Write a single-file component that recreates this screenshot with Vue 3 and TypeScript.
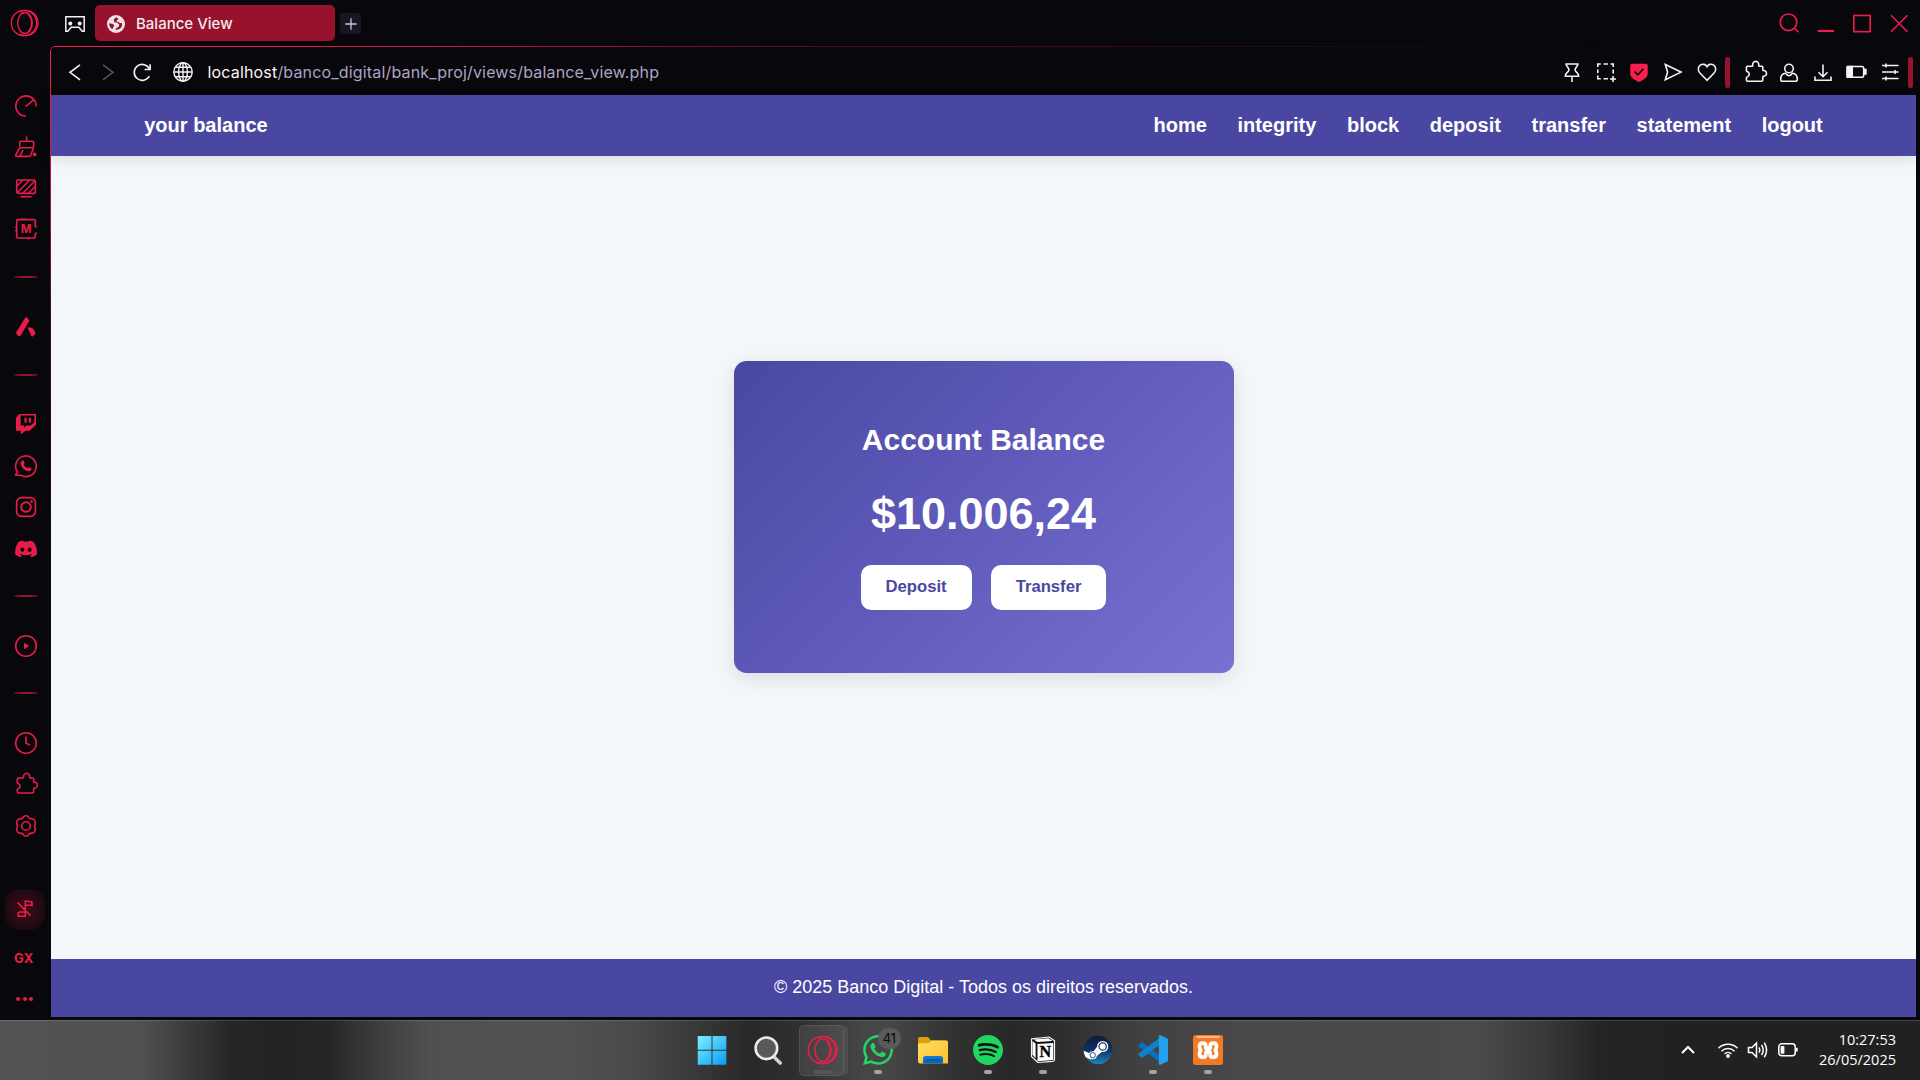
<script setup lang="ts">
interface SideItem {
  name: string
  kind: 'icon' | 'rule'
  art?: string
}

const navLinks: string[] = ['home', 'integrity', 'block', 'deposit', 'transfer', 'statement', 'logout']

const discord = 'M20.317 4.3698a19.7913 19.7913 0 00-4.8851-1.5152.0741.0741 0 00-.0785.0371c-.211.3753-.4447.8648-.6083 1.2495-1.8447-.2762-3.68-.2762-5.4868 0-.1636-.3933-.4058-.8742-.6177-1.2495a.077.077 0 00-.0785-.037 19.7363 19.7363 0 00-4.8852 1.515.0699.0699 0 00-.0321.0277C.5334 9.0458-.319 13.5799.0992 18.0578a.0824.0824 0 00.0312.0561c2.0528 1.5076 4.0413 2.4228 5.9929 3.0294a.0777.0777 0 00.0842-.0276c.4616-.6304.8731-1.2952 1.226-1.9942a.076.076 0 00-.0416-.1057c-.6528-.2476-1.2743-.5495-1.8722-.8923a.077.077 0 01-.0076-.1277c.1258-.0943.2517-.1923.3718-.2914a.0743.0743 0 01.0776-.0105c3.9278 1.7933 8.18 1.7933 12.0614 0a.0739.0739 0 01.0785.0095c.1202.099.246.1981.3728.2924a.077.077 0 01-.0066.1276 12.2986 12.2986 0 01-1.873.8914.0766.0766 0 00-.0407.1067c.3604.698.7719 1.3628 1.225 1.9932a.076.076 0 00.0842.0286c1.961-.6067 3.9495-1.5219 6.0023-3.0294a.077.077 0 00.0313-.0552c.5004-5.177-.8382-9.6739-3.5485-13.6604a.061.061 0 00-.0312-.0286zM8.02 15.3312c-1.1825 0-2.1569-1.0857-2.1569-2.419 0-1.3332.9555-2.4189 2.157-2.4189 1.2108 0 2.1757 1.0952 2.1568 2.419 0 1.3332-.9555 2.4189-2.1569 2.4189zm7.9748 0c-1.1825 0-2.1569-1.0857-2.1569-2.419 0-1.3332.9554-2.4189 2.1569-2.4189 1.2108 0 2.1757 1.0952 2.1568 2.419 0 1.3332-.946 2.4189-2.1568 2.4189Z'

const phone = 'M17.472 14.382c-.297-.149-1.758-.867-2.03-.967-.273-.099-.471-.148-.67.15-.197.297-.767.966-.94 1.164-.173.199-.347.223-.644.075-.297-.15-1.255-.463-2.39-1.475-.883-.788-1.48-1.761-1.653-2.059-.173-.297-.018-.458.13-.606.134-.133.298-.347.446-.52.149-.174.198-.298.298-.497.099-.198.05-.371-.025-.52-.075-.149-.669-1.612-.916-2.207-.242-.579-.487-.5-.669-.51-.173-.008-.371-.01-.57-.01-.198 0-.52.074-.792.372-.272.297-1.04 1.016-1.04 2.479 0 1.462 1.065 2.875 1.213 3.074.149.198 2.096 3.2 5.077 4.487.709.306 1.262.489 1.694.625.712.227 1.36.195 1.871.118.571-.085 1.758-.719 2.006-1.413.248-.694.248-1.289.173-1.413-.074-.124-.272-.198-.57-.347'

const bubble = 'm-5.421 7.403h-.004a9.87 9.87 0 01-5.031-1.378l-.361-.214-3.741.982.998-3.648-.235-.374a9.86 9.86 0 01-1.51-5.26c.001-5.45 4.436-9.884 9.888-9.884 2.64 0 5.122 1.03 6.988 2.898a9.825 9.825 0 012.893 6.994c-.003 5.45-4.437 9.884-9.885 9.884m8.413-18.297A11.815 11.815 0 0012.05 0C5.495 0 .16 5.335.157 11.892c0 2.096.547 4.142 1.588 5.945L.057 24l6.305-1.654a11.882 11.882 0 005.683 1.448h.005c6.554 0 11.89-5.335 11.893-11.893a11.821 11.821 0 00-3.48-8.413Z'

const spotify = 'M12 0C5.4 0 0 5.4 0 12s5.4 12 12 12 12-5.4 12-12S18.66 0 12 0zm5.521 17.34c-.24.359-.66.48-1.021.24-2.82-1.74-6.36-2.101-10.561-1.141-.418.122-.779-.179-.899-.539-.12-.421.18-.78.54-.9 4.56-1.021 8.52-.6 11.64 1.32.42.18.479.659.301 1.02zm1.44-3.3c-.301.42-.841.6-1.262.3-3.239-1.98-8.159-2.58-11.939-1.38-.479.12-1.02-.12-1.14-.6-.12-.48.12-1.021.6-1.141C9.6 9.9 15 10.561 18.72 12.84c.361.181.54.78.241 1.2zm.12-3.36C15.24 8.4 8.82 8.16 5.16 9.301c-.6.179-1.2-.181-1.38-.721-.18-.601.18-1.2.72-1.381 4.26-1.26 11.28-1.02 15.721 1.621.539.3.719 1.02.419 1.56-.299.421-1.02.599-1.559.3z'

const puzzle = 'M3.600 6.200h4.600c.5 0 .6-.4.5-.9a3.100 3.100 0 1 1 6 0c-.1.5 0 .9.5.9h2.700q.9 0 .9.900v2.700c0 .5.3.7.8.7a2.900 2.900 0 1 1 0 5.800c-.5 0-.8.2-.8.7v3q0 1.200-1.200 1.200H3.600q-1.200 0-1.200-1.200v-2.200c0-.5.300-.7.8-.8a2.800 2.800 0 0 0 0-5.400c-.5-.1-.8-.3-.8-.8V7.400q0-1.200 1.200-1.200z'

const sideItems: SideItem[] = [
  { name: 'speed', kind: 'icon', art: '<path d="M12 22.300A10.200 10.200 0 1 1 22.200 12.400M11.600 12.400l7.800-6.300"/>' },
  { name: 'cleaner', kind: 'icon', art: '<path d="M12.600 1.500v4.800M5.800 11.500V7.600q0-1.300 1.300-1.300h11.200q1.300 0 1.300 1.300v3.900q0 1.200-1.200 1.200H6.400q-.9 0-1.300 1L1.700 20q-.3 1.400 1 1.400h12.600q1.100 0 1.600-1.200l2.600-7.700M9 15.200l-2.800 5.200"/><circle cx="20.600" cy="19.400" r="1.900" fill="currentColor" stroke="none"/>' },
  { name: 'monitor', kind: 'icon', art: '<rect x="2.700" y="4" width="18.700" height="13.400" rx="1.800"/><path d="M3 10l6-6M3.500 16.500L15.500 4.200M9 17L20.500 5.300M14.800 17l6.200-6.200" stroke-width="1.500"/><path d="M6.400 20.700h11.200"/>' },
  { name: 'memory', kind: 'icon', art: '<path d="M21.300 8V4q0-1.400-1.400-1.400H4.100Q2.700 2.600 2.700 4v15.600Q2.700 21 4.100 21h15.800q1.400 0 1.400-1.400v-3M21.300 8v2M21.300 16h1.500M1.200 10.300h1.500M1.200 13.500h1.500M7.300 2.600V1.200M10.300 2.600V1.200M14.300 21v1.500M21.300 10h1.500"/><text x="12" y="15.800" text-anchor="middle" font-family="Inter, sans-serif" font-weight="700" font-size="11.500" fill="currentColor" stroke="none">M</text>' },
  { name: 'rule-1', kind: 'rule' },
  { name: 'opera-air', kind: 'icon', art: '<path stroke="none" fill="currentColor" d="M11.800 2q2.600 1 3.600 3.700L6.400 21q-3.300.6-4.400-3.600zM13.300 12.600q4.400-1.300 7.100 2.900l1.300 3-3.300 3.200q-1.400-.5-2-3z"/>' },
  { name: 'rule-2', kind: 'rule' },
  { name: 'twitch', kind: 'icon', art: '<path stroke="none" fill="currentColor" fill-rule="evenodd" d="M5.300 1.900H22v10.800l-6.300 6.100h-4L6.800 22.200v-3.400H2V5.700zM6.600 3.600v9.900h3.400v2.200l2.500-2.200h4.200l3.600-3.200V3.600z"/><path d="M11.600 5.700v5.100M15.900 5.700v5.100" stroke-width="2.200"/>' },
  { name: 'whatsapp', kind: 'icon', art: '<path d="M3.600 18.300A10.300 10.300 0 1 1 7 21.300H2.200q-.8 0-.5-.8z"/><path stroke="none" fill="currentColor" d="M8 6.600q.8-.8 1.500.2l1 1.800q.4.8-.3 1.500-.5.4-.1 1.100 1.200 2.100 2.900 2.800.6.200 1-.3.6-.8 1.400-.4l1.700 1q.8.5.3 1.400-1.200 1.900-3.300 1.600-6-1.200-7.300-7.500-.2-1.900 1.200-3.200z"/>' },
  { name: 'instagram', kind: 'icon', art: '<rect x="2.600" y="2.600" width="18.800" height="18.800" rx="5"/><circle cx="12" cy="12" r="4.800" stroke-width="2"/><circle cx="17.600" cy="6.400" r="1.300" fill="currentColor" stroke="none"/>' },
  { name: 'discord', kind: 'icon', art: `<path stroke="none" fill="currentColor" transform="translate(1.100 .9) scale(.91)" d="${discord}"/>` },
  { name: 'rule-3', kind: 'rule' },
  { name: 'player', kind: 'icon', art: '<circle cx="12" cy="12" r="10.300"/><path stroke="none" fill="currentColor" d="M10 8.700v6.600l5.300-3.300z"/>' },
  { name: 'rule-4', kind: 'rule' },
  { name: 'history', kind: 'icon', art: '<circle cx="12" cy="12" r="10.300"/><path d="M12 5.500v6.800l4 1.600"/>' },
  { name: 'extensions', kind: 'icon', art: `<path transform="translate(.9 -.2)" d="${puzzle}"/>` },
  { name: 'settings', kind: 'icon', art: '<path d="M12 1.700c1.500 0 2.300.7 2.900 1.900.4.800.9 1 1.700 1 3.300-.3 5.600 2.700 4.500 5.300-.5 1.300-.5 2.900 0 4.200 1.100 2.600-1.200 5.600-4.500 5.300-.8 0-1.300.2-1.700 1-.6 1.200-1.400 1.900-2.900 1.900s-2.300-.7-2.900-1.900c-.4-.8-.9-1-1.700-1-3.300.3-5.600-2.700-4.500-5.300.5-1.300.5-2.900 0-4.200-1.100-2.600 1.200-5.600 4.500-5.300.8 0 1.300-.2 1.700-1C9.700 2.400 10.500 1.700 12 1.700z"/><circle cx="12" cy="12" r="4.300"/>' },
]
</script>

<template>
  <div class="screen">
    <div class="browser">
      <aside class="sidebar">
        <svg class="opera-mark" width="30" height="30" viewBox="0 0 30 30">
          <g fill="none" stroke="#f01d4b" stroke-width="1.300">
            <circle cx="14" cy="15" r="12.700" />
            <ellipse cx="15" cy="15" rx="7.300" ry="10.500" />
            <path d="M10 3.800a12.500 12.500 0 1 1 0 22.400M18 6.500a7.500 10 0 0 1 0 17" />
          </g>
        </svg>
        <div v-for="item in sideItems" :key="item.name" class="side-item" :class="[item.kind, item.name]">
          <svg v-if="item.kind === 'icon'" class="side-icon" viewBox="0 0 24 24" v-html="item.art"></svg>
          <i v-else class="side-rule"></i>
        </div>
        <div class="music">
          <svg width="24" height="24" viewBox="0 0 24 24" fill="none" stroke="#f01d4b" stroke-width="1.500">
            <path d="M4.500 5.500l13 13M12.300 18.500V4l6.700 1v3.200h-6.700M12.300 15H6.700l-1.500 1v3.300h7z" />
          </svg>
        </div>
        <div class="gx">GX</div>
        <div class="dots"><i></i><i></i><i></i></div>
      </aside>

      <div class="main">
        <div class="tabs">
          <svg class="pad" width="22" height="18" viewBox="0 0 22 18">
            <path d="M1.800 1.700h18.400v14.500h-2l-3.400-3.900H7.200l-3.400 3.900h-2z" fill="none" stroke="#f5f2f7" stroke-width="1.500" />
            <circle cx="6.300" cy="8.400" r="2" fill="#f5f2f7" /><circle cx="15.700" cy="8.400" r="2" fill="#f5f2f7" />
          </svg>
          <div class="tab">
            <svg width="18" height="18" viewBox="0 0 18 18">
              <circle cx="9" cy="9" r="9" fill="#ece4e9" />
              <path d="M9.500 2.300L6.800 4.200l.3 2.700 3.300.8 1.900 1.700-.6 2.300-2.900 1.700-.3 1.400c4.500.4 7.200-2.700 6.500-6.700-1.300.2-2.500.1-3.300-1.100l-1.800-.3-.2-1.500 2-1zM2 8.200c.3 3 1.400 4.700 3.700 6l.3-1.800 1.400-1.600-1.500-1.700z" fill="#97122d" />
            </svg>
            <span>Balance View</span>
          </div>
          <div class="new-tab">
            <svg width="12" height="12" viewBox="0 0 12 12"><path d="M6 .3v11.400M.3 6h11.400" stroke="#c9c3dc" stroke-width="1.300" /></svg>
          </div>
          <div class="win-controls">
            <svg viewBox="0 0 24 24"><circle cx="11.500" cy="11.300" r="8.300" /><path d="M17.500 17.300l4 4" /></svg>
            <svg viewBox="0 0 24 24"><path d="M3.800 20h16.200" stroke-width="2" /></svg>
            <svg viewBox="0 0 24 24"><rect x="3.800" y="4.500" width="16.400" height="16.200" /></svg>
            <svg viewBox="0 0 24 24"><path d="M4 4.200l16.500 16.500M20.500 4.200L4 20.700" /></svg>
          </div>
        </div>

        <div class="toolbar">
          <svg class="back" viewBox="0 0 24 24"><path d="M17 4.800L7 12.300l10 7.500" /></svg>
          <svg class="forward" viewBox="0 0 24 24"><path d="M7 4.800l10 7.500-10 7.500" /></svg>
          <svg class="reload" viewBox="0 0 24 24"><path d="M19.600 9.200A8 8 0 1 0 19.400 16M20.100 4.200v5.300h-5.500" /></svg>
          <svg class="globe" viewBox="0 0 24 24"><circle cx="12" cy="12" r="9.200" /><ellipse cx="12" cy="12" rx="4.400" ry="9.200" /><path d="M12 2.800v18.400M2.800 12h18.400M4.400 7.200h15.200M4.400 16.800h15.200" /></svg>
          <div class="url"><b>localhost</b>/banco_digital/bank_proj/views/balance_view.php</div>
          <div class="actions first">
            <svg viewBox="0 0 24 24"><path d="M5.300 4h13.400M6.200 4c0 2.500 2.700 3.500 2.700 5.800 0 2.700-3.600 2.700-3.600 6.500h13.400c0-3.800-3.600-3.800-3.600-6.500 0-2.300 2.700-3.300 2.700-5.800M12 16.500V22" /></svg>
            <svg viewBox="0 0 24 24"><path d="M3.800 7V4h3M9.500 4h4.500M16.500 4h2.700v3M3.800 9.500v3.500M3.800 15.500v3.200h3M9.500 18.700H14M19.200 9.500v4M19 16v6M16 19h6" /></svg>
            <svg viewBox="0 0 24 24"><path d="M5 3.700h14q1.700 0 1.700 1.700v8.300c0 4-4.200 6-8.700 8.300-4.500-2.300-8.700-4.300-8.700-8.300V5.400q0-1.700 1.700-1.700z" fill="#fa1e4e" stroke="none" /><path d="M7.600 11.600l3.200 3.300 5.600-6" stroke="#0a080d" stroke-width="1.600" /></svg>
            <svg viewBox="0 0 24 24"><path d="M4.300 4.500l15.700 7.600-15.700 7.700 2.300-7.700z" /></svg>
            <svg viewBox="0 0 24 24"><path d="M12 20.300L4.900 13C2.400 10.300 3 6.500 5.600 4.900 8 3.500 10.800 4.300 12 6.600c1.200-2.300 4-3.100 6.400-1.700 2.600 1.600 3.200 5.400.7 8.100z" /></svg>
          </div>
          <i class="divider"></i>
          <div class="actions second">
            <svg viewBox="0 0 24 24"><path :d="puzzle" /></svg>
            <svg viewBox="0 0 24 24"><circle cx="12" cy="8.500" r="4.300" /><path d="M8.600 13.200c-3.300.3-4.900 1.900-4.900 6.100q0 2 1.600 2h13.400q1.600 0 1.600-2c0-4.200-1.600-5.800-4.900-6.100-1.800 3.300-5 3.300-6.800 0z" /></svg>
            <svg viewBox="0 0 24 24"><path d="M12 4.500v12M7.500 12.300l4.500 4.400 4.500-4.400M4 16.500v3.700h16v-3.700" /></svg>
            <svg viewBox="0 0 24 24"><rect x="3.200" y="6.500" width="16.500" height="10.700" rx="2" /><path d="M3.200 6.500h5v10.700h-5z" fill="#f5f2f7" /><path d="M20.300 9.500h1.600v4.500h-1.600z" /></svg>
            <svg viewBox="0 0 24 24"><path d="M4 5.500h16.500M4 12h16.500M4 18.500h16.500M8 3.500v4M17 10v4M8 16.500v4" /></svg>
          </div>
          <i class="divider last"></i>
        </div>

        <div class="page">
          <header class="page-head">
            <div class="brand">your balance</div>
            <nav><a v-for="link in navLinks" :key="link">{{ link }}</a></nav>
          </header>
          <main class="page-body">
            <section class="card">
              <h2>Account Balance</h2>
              <p class="amount">$10.006,24</p>
              <div class="buttons">
                <button type="button">Deposit</button>
                <button type="button">Transfer</button>
              </div>
            </section>
          </main>
          <footer class="page-foot">© 2025 Banco Digital - Todos os direitos reservados.</footer>
        </div>
      </div>
    </div>

    <div class="taskbar">
      <div class="apps">
        <div class="app first-app">
          <svg width="30" height="30" viewBox="0 0 30 30">
            <defs><linearGradient id="win" x1="0" y1="0" x2="1" y2="1"><stop offset="0" stop-color="#7df0ff" /><stop offset="1" stop-color="#0a9bf8" /></linearGradient></defs>
            <path fill="url(#win)" d="M.7 1h13.800v13.700H.7zM15.500 1h13.800v13.700H15.500zM.7 15.700h13.800v14H.7zM15.500 15.700h13.800v14H15.500z" />
          </svg>
        </div>
        <div class="app">
          <svg width="30" height="30" viewBox="0 0 30 30" fill="none">
            <path d="M20.500 21.500l6.700 6.500" stroke="#cfd1d6" stroke-width="3.600" stroke-linecap="round" />
            <circle cx="13.400" cy="13.300" r="10.800" fill="#59595a" stroke="#ececee" stroke-width="2.600" />
          </svg>
        </div>
        <div class="app active">
          <svg width="32" height="32" viewBox="0 0 30 30">
            <g fill="none" stroke="#f01d4b" stroke-width="1.300">
              <circle cx="14" cy="15" r="12.800" />
              <ellipse cx="15" cy="15" rx="7.500" ry="10.700" />
              <path d="M10 3.600a12.700 12.700 0 1 1 0 22.800M18 6.300a7.700 10.200 0 0 1 0 17.400" />
            </g>
          </svg>
        </div>
        <div class="app running">
          <svg width="30" height="30" viewBox="0 0 24 24"><path :d="phone + bubble" fill="#25d366" /></svg>
          <span class="badge">41</span>
        </div>
        <div class="app">
          <svg width="32" height="30" viewBox="0 0 32 30">
            <defs>
              <linearGradient id="fold" x1="0" y1="0" x2="1" y2="1"><stop offset="0" stop-color="#ffdf6b" /><stop offset="1" stop-color="#fdbf22" /></linearGradient>
              <linearGradient id="dock" x1="0" y1="0" x2="0" y2="1"><stop offset="0" stop-color="#0f7ed2" /><stop offset="1" stop-color="#0a62b4" /></linearGradient>
            </defs>
            <path d="M1 4q0-2 2-2h8l3 3.500H29q2 0 2 2V16H1z" fill="#e0a008" />
            <path d="M1 8.500L12 8l2.500-2.500H29q2 0 2 2V28.500H3q-2 0-2-2z" fill="url(#fold)" />
            <path d="M6 28.500V23.500q0-2.500 2.500-2.500h15q2.500 0 2.500 2.500v5z" fill="url(#dock)" />
            <path d="M9.500 25h13" stroke="#0a4b96" stroke-width="1.200" />
          </svg>
        </div>
        <div class="app running">
          <svg width="30" height="30" viewBox="0 0 24 24"><circle cx="12" cy="12" r="11" fill="#111" /><path :d="spotify" fill="#1ed760" /></svg>
        </div>
        <div class="app running">
          <svg width="26" height="28" viewBox="0 0 26 28">
            <path d="M1.500 2.800L19 1l5.500 3.800v18.400q0 2-2 2.200L8 26.500l-6.500-6z" fill="#111" stroke="#f3f3f3" stroke-width="1.200" stroke-linejoin="round" />
            <path d="M3.500 3.500L18.500 2.300l4 2.600L7.500 6z" fill="#fff" />
            <path d="M2.400 5L5.600 7.500v14.700L2.400 18.700z" fill="#fff" />
            <path d="M7.500 8L23.300 7v17L7.500 25.300z" fill="#fff" />
            <text x="15.400" y="21.300" text-anchor="middle" font-family="Liberation Serif, serif" font-weight="700" font-size="16" stroke="#000" stroke-width=".4">N</text>
          </svg>
        </div>
        <div class="app">
          <svg width="30" height="30" viewBox="0 0 30 30">
            <defs>
              <linearGradient id="steam" x1="0" y1="0" x2="0" y2="1"><stop offset="0" stop-color="#15193f" /><stop offset=".5" stop-color="#0e3263" /><stop offset="1" stop-color="#1b88bb" /></linearGradient>
              <clipPath id="disc"><circle cx="15" cy="15" r="14.300" /></clipPath>
            </defs>
            <circle cx="15" cy="15" r="14.300" fill="url(#steam)" />
            <g clip-path="url(#disc)">
              <path d="M0 15.500l8.500 3.500 6.500-8.500 5 5.500-7.500 6-5 2.500L0 21z" fill="#fff" />
              <circle cx="9.800" cy="20.200" r="4" fill="#fff" /><circle cx="9.800" cy="20.200" r="2.700" fill="none" stroke="#20477a" stroke-width=".9" />
              <circle cx="19.700" cy="11.500" r="5.600" fill="#fff" /><circle cx="19.700" cy="11.500" r="3.700" fill="#fff" stroke="#17325e" stroke-width="1.200" />
            </g>
          </svg>
        </div>
        <div class="app running">
          <svg width="30" height="30" viewBox="0 0 30 30">
            <path d="M1 9.500l2.200-2q1-.6 2 .2L24 22v7L1 11.800q-1.100-1.200 0-2.300z" fill="#0a6fb8" />
            <path d="M1 20.500l2.200 2q1 .6 2-.2L24 8V1L1 18.200q-1.100 1.200 0 2.300z" fill="#1280c8" />
            <path d="M22.300.3L29 3.300q1 .5 1 1.600v20.200q0 1.100-1 1.600l-6.700 3q-1.500.3-1.500-1V1.300q0-1.300 1.500-1z" fill="#25a0ef" />
          </svg>
        </div>
        <div class="app running">
          <svg width="30" height="30" viewBox="0 0 30 30">
            <rect width="30" height="30" rx="2.500" fill="#f37a24" />
            <rect x="3.500" y="1" width="23" height="2" rx="1" fill="#fbb98a" />
            <path d="M12.800 12.300V11q0-2.800-2.800-2.800Q6.500 8.200 6.500 11.500q0 2 1.300 3.700-1.300 1.700-1.300 3.700 0 3.300 3.500 3.300 2.800 0 2.800-2.800v-1.300q0-1.300 1.300-1.300h1.800q1.300 0 1.300 1.300v1.300q0 2.800 2.800 2.800 3.500 0 3.500-3.300 0-2-1.300-3.700 1.300-1.700 1.300-3.700 0-3.300-3.500-3.300-2.800 0-2.800 2.800v1.300q0 1.300-1.300 1.300h-1.800q-1.300 0-1.300-1.300z" fill="none" stroke="#fff" stroke-width="3.800" stroke-linejoin="round" />
          </svg>
        </div>
      </div>

      <div class="tray">
        <svg width="16" height="10" viewBox="0 0 16 10"><path d="M2 8l6-6 6 6" stroke-width="2" /></svg>
        <svg class="wifi" width="22" height="18" viewBox="0 0 22 18"><path d="M1.500 7.200a13.400 13.400 0 0 1 19 0M4.500 10.200a9.200 9.200 0 0 1 13 0M7.500 13a5 5 0 0 1 7 0" /><circle cx="11" cy="15" r="1.900" fill="#fff" stroke="none" /></svg>
        <svg class="speaker" width="22" height="20" viewBox="0 0 22 20"><path d="M1.500 7.500H5L9.500 3v14L5 12.500H1.500zM12 7.500q1.600 2.500 0 5M14.600 5q3.200 5 0 10M17.300 2.700q4.600 7.300 0 14.600" /></svg>
        <svg class="power" width="22" height="16" viewBox="0 0 22 16"><rect x="1.800" y="1.800" width="16.400" height="12" rx="3" /><rect x="3.600" y="4" width="3.800" height="7.700" rx=".8" fill="#fff" stroke="none" /><path d="M19.700 5.800v3.700" stroke-width="2" /></svg>
        <div class="clock"><span>10:27:53</span><span>26/05/2025</span></div>
      </div>
    </div>
  </div>
</template>

<style>
html,
body {
  margin: 0;
  background: #08070c;
}
</style>

<style scoped>
.screen {
  width: 1920px;
  height: 1080px;
  overflow: hidden;
  display: flex;
  flex-direction: column;
  background: #08070c;
  font-family: Inter, "Liberation Sans", sans-serif;
}
.screen svg {
  display: block;
  flex: none;
}
.browser {
  display: flex;
  height: 1020px;
}

/* Sidebar */
.sidebar {
  width: 50px;
  display: flex;
  flex-direction: column;
  color: #e71c48;
}
.opera-mark {
  margin: 7.5px 0 48px 10px;
}
.side-item {
  height: 41px;
  display: flex;
  align-items: center;
  padding-left: 14px;
}
.side-icon {
  width: 24px;
  height: 24px;
  fill: none;
  stroke: currentColor;
  stroke-width: 1.6;
}
.side-rule {
  width: 24px;
  height: 2px;
  background: radial-gradient(ellipse at center, #d01b42 0%, rgba(208, 27, 66, 0.6) 50%, transparent 100%);
}
.rule-1 { height: 55px; }
.opera-air { height: 45px; }
.rule-2 { height: 51px; margin-bottom: 3px; }
.twitch, .whatsapp, .instagram, .discord { height: 41.5px; }
.rule-3 { height: 53px; }
.player { height: 46px; }
.rule-4 { height: 48px; margin-bottom: 5.5px; }
.history, .extensions, .settings { height: 41.5px; }
.music {
  width: 40px;
  height: 41px;
  margin: 42px 0 0 5px;
  border-radius: 14px;
  display: flex;
  align-items: center;
  justify-content: center;
  background: radial-gradient(circle, #420c1b 0%, #2b0a15 45%, #0d080d 100%);
}
.music svg { margin-right: 1px; }
.gx {
  margin: 15.5px 0 0 14px;
  height: 26px;
  line-height: 26px;
  font-size: 13px;
  font-weight: 700;
  letter-spacing: 0.3px;
}
.dots {
  display: flex;
  gap: 2.3px;
  margin: 25.5px 0 0 16.3px;
}
.dots i {
  width: 4px;
  height: 4px;
  border-radius: 50%;
  background: #e71c48;
}

/* Browser chrome */
.main {
  position: relative;
  width: 1870px;
  display: flex;
  flex-direction: column;
}
.main::before {
  content: "";
  position: absolute;
  inset: 46px 0 0 0;
  border: solid #f01d4b;
  border-width: 1px 0 0 1px;
  border-top-left-radius: 5px;
  pointer-events: none;
  -webkit-mask-image: radial-gradient(ellipse 1550px 520px at 0 0, #000 0%, rgba(0, 0, 0, 0.9) 20%, rgba(0, 0, 0, 0.3) 50%, transparent 100%);
  mask-image: radial-gradient(ellipse 1550px 520px at 0 0, #000 0%, rgba(0, 0, 0, 0.9) 20%, rgba(0, 0, 0, 0.3) 50%, transparent 100%);
}
.tabs {
  height: 47px;
  display: flex;
  align-items: flex-start;
}
.pad {
  margin: 15px 9px 0 14px;
}
.tab {
  width: 240px;
  height: 36px;
  margin-top: 5px;
  border-radius: 5px;
  background: #97122d;
  display: flex;
  align-items: center;
  box-sizing: border-box;
  padding: 1px 0 0 12px;
  gap: 11px;
  color: #f3e9ee;
  font-size: 15px;
  font-weight: 450;
}
.new-tab {
  width: 21px;
  height: 21px;
  margin: 13px 0 0 5px;
  border-radius: 4px;
  background: #191622;
  display: flex;
  align-items: center;
  justify-content: center;
}
.win-controls {
  margin: 11px 3px 0 auto;
  display: flex;
  gap: 12.5px;
  padding-right: 6.5px;
}
.win-controls svg {
  width: 24px;
  height: 24px;
  fill: none;
  stroke: #f01d4b;
  stroke-width: 1.6;
}
.toolbar {
  height: 48px;
  display: flex;
  align-items: center;
}
.toolbar svg {
  width: 24px;
  height: 24px;
  margin-top: 1px;
  fill: none;
  stroke: #f5f2f7;
  stroke-width: 1.6;
}
.toolbar .back { margin-left: 13px; }
.toolbar .forward { margin-left: 9px; stroke: #56535c; }
.toolbar .reload { margin-left: 9.5px; }
.toolbar .globe { margin-left: 17.5px; stroke-width: 1.4; }
.url {
  margin-left: 12.5px;
  font-size: 16px;
  line-height: 24px;
  letter-spacing: 0.17px;
  margin-top: 1px;
  color: #aca4c2;
  white-space: nowrap;
}
.url b {
  font-weight: 400;
  color: #f8f6fa;
}
.actions {
  display: flex;
  gap: 9.6px;
}
.actions.first { margin-left: auto; }
.actions.second { margin-left: 14px; }
.divider {
  width: 5px;
  height: 31px;
  margin: 2px 0 0 6px;
  border-radius: 2px;
  background: #97122d;
}
.divider.last { margin: 2px 7px 0 6px; }

/* Web page */
.page {
  width: 1865px;
  height: 922px;
  margin-left: 1px;
  display: flex;
  flex-direction: column;
  background: #f3f7fa;
  font-family: "Liberation Sans", Arial, sans-serif;
}
.page-head {
  height: 61px;
  box-sizing: border-box;
  padding: 0 5%;
  display: flex;
  align-items: center;
  justify-content: space-between;
  background: #4a47a3;
  box-shadow: 0 4px 12px rgba(0, 0, 0, 0.1);
  color: #fff;
  font-size: 20px;
  font-weight: 700;
}
.page-head nav {
  display: flex;
  gap: 30.6px;
}
.page-body {
  flex: 1;
  display: flex;
  align-items: center;
  justify-content: center;
}
.card {
  width: 500px;
  height: 312px;
  margin-bottom: 82px;
  border-radius: 12.5px;
  display: flex;
  flex-direction: column;
  align-items: center;
  background: linear-gradient(135deg, #4a47a3, #7871d4);
  box-shadow: 0 5px 19px rgba(0, 0, 0, 0.1);
  color: #fff;
}
.card h2 {
  margin: 62px 0 0;
  font-size: 30px;
  line-height: 34px;
}
.amount {
  margin: 31px 0 0;
  font-size: 45px;
  line-height: 51px;
  font-weight: 700;
}
.buttons {
  display: flex;
  gap: 19px;
  margin-top: 26px;
}
.buttons button {
  height: 45.5px;
  padding: 0 25px;
  border: 0;
  border-radius: 10px;
  background: #fff;
  color: #4a47a3;
  font: 700 16.67px "Liberation Sans", Arial, sans-serif;
}
.page-foot {
  height: 58px;
  line-height: 56px;
  text-align: center;
  background: #4a47a3;
  color: #fff;
  font-size: 18px;
}

/* Taskbar */
.taskbar {
  height: 60px;
  box-sizing: border-box;
  border-top: 1px solid rgba(255, 255, 255, 0.15);
  display: flex;
  background: linear-gradient(90deg, #535353 0, #515151 140px, #3c3c3c 185px, #262626 230px, #222 280px, #262626 330px, #3e3e3e 380px, #505050 430px, #525252 560px, #4a4a4a 630px, #3a3a3a 690px, #282828 750px, #303030 800px, #464646 865px, #464646 890px, #333 950px, #272727 1010px, #2e2e2e 1060px, #414141 1140px, #494949 1250px, #4a4a4a 1480px, #3a3a3a 1540px, #242424 1600px, #212121 1680px, #212121 1920px);
}
.apps {
  display: flex;
  margin-left: 685.5px;
}
.app {
  position: relative;
  width: 55px;
  height: 59px;
  box-sizing: border-box;
  padding-bottom: 2px;
  display: flex;
  align-items: center;
  justify-content: center;
}
.first-app { padding-right: 3px; }
.app.running::after {
  content: "";
  position: absolute;
  left: 23px;
  bottom: 6px;
  width: 8px;
  height: 4px;
  border-radius: 2px;
  background: #a5a5a5;
}
.app.active::before {
  content: "";
  position: absolute;
  left: 3px;
  top: 4px;
  width: 43px;
  height: 49px;
  border-radius: 5px;
  background: rgba(255, 255, 255, 0.08);
  border: 1px solid rgba(255, 255, 255, 0.09);
  box-shadow: 5px 0 0 -1px rgba(255, 255, 255, 0.07);
}
.app.active::after {
  content: "";
  position: absolute;
  left: 17px;
  bottom: 6px;
  width: 20px;
  height: 4px;
  border-radius: 2px;
  background: #555;
}
.app.active svg {
  position: relative;
}
.badge {
  position: absolute;
  left: 27px;
  top: 7px;
  width: 23px;
  height: 21px;
  border-radius: 10px;
  background: #5a5a5a;
  color: #0a0a0a;
  font-size: 13.5px;
  line-height: 21px;
  text-align: center;
  letter-spacing: -0.5px;
}
.tray {
  flex: 1;
  display: flex;
  align-items: center;
  justify-content: flex-end;
  padding: 0 24px 2px 0;
}
.tray svg {
  fill: none;
  stroke: #fff;
  stroke-width: 1.5;
}
.wifi { margin-left: 21px; }
.speaker { margin-left: 8px; }
.power { margin-left: 8px; }
.clock {
  width: 97px;
  display: flex;
  flex-direction: column;
  align-items: flex-end;
  color: #fff;
  font: 14.5px/20px "Open Sans", "Noto Sans", sans-serif;
}
</style>
